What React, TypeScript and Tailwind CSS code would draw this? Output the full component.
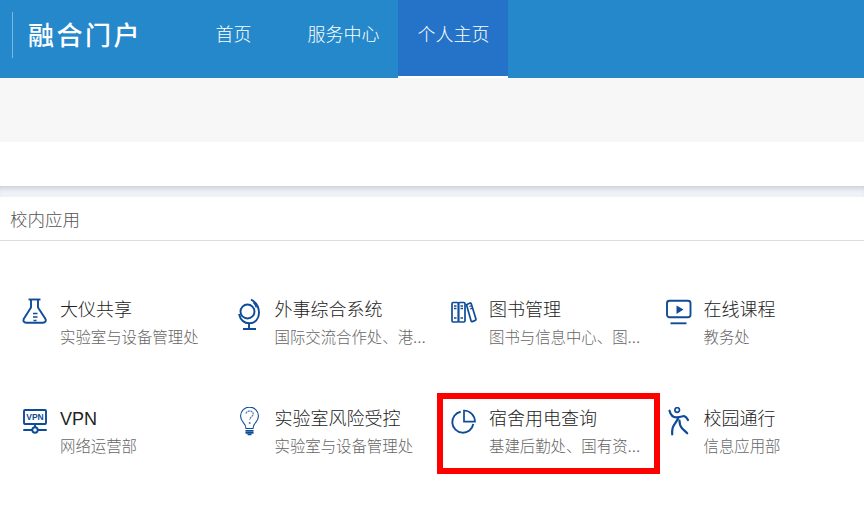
const font = { fontFamily: '"Liberation Sans", "Noto Sans CJK SC", sans-serif' };
const blue = "#0f4c97";

const Flask = () => (
  <svg width="32" height="32" viewBox="0 0 32 32" fill="none" stroke={blue} strokeWidth="1.900">
    <path d="M6.500 1.500h12" />
    <path d="M9 1.500v8L2 20.500c-1.300 2.400-.2 4.300 2.400 4.300h16.400c2.600 0 3.700-1.900 2.400-4.300L16 9.500v-8" />
    <path d="M11 15.500h4.500M11 19h4.500M11.500 22.500h3" strokeWidth="1.500" />
  </svg>
);

const Globe = () => (
  <svg width="32" height="32" viewBox="0 0 32 32" fill="none" stroke={blue} strokeWidth="1.900">
    <circle cx="10.500" cy="13.500" r="7" />
    <path d="M2 16c1.500 6 5.500 9.300 10.500 9.300 5.500 0 9.500-4.500 9.500-10.300 0-6-3.500-11-8-13.500" />
    <path d="M12 25.500v5M6 31h13" />
    <path d="M16.500 4.500c1.500 1.500 2.500 3 2.800 5" strokeWidth="1.500" />
  </svg>
);

const Books = () => (
  <svg width="32" height="32" viewBox="0 0 32 32" fill="none" stroke={blue} strokeWidth="1.700">
    <rect x="1" y="4.500" width="6.500" height="19.500" rx="1.200" />
    <rect x="7.500" y="4.500" width="6.500" height="19.500" rx="1.200" />
    <path d="M15.500 6.700l3.500-1.600c.6-.2 1 0 1.200.5l4.800 15.600c.1.600-.1 1-.7 1.200l-3 1.200c-.6.100-1 0-1.200-.6L15.500 6.700z" />
    <path d="M3 8h2.500M3 10.500h2.500M9.500 8H12M9.500 10.500H12M3 20h2.500M9.500 20H12M18.300 8.500l2-.7M19 11l2-.7" strokeWidth="1.300" />
  </svg>
);

const Screen = () => (
  <svg width="32" height="32" viewBox="0 0 32 32" fill="none" stroke={blue} strokeWidth="1.900">
    <rect x="1" y="2.700" width="23.500" height="16.600" rx="2.500" />
    <path d="M4.500 25.300h16" />
    <path d="M10.500 7.500l7 4-7 4.500z" fill={blue} stroke="none" />
  </svg>
);

const Vpn = () => (
  <svg width="32" height="32" viewBox="0 0 32 32" fill="none" stroke={blue} strokeWidth="1.900">
    <rect x="2" y="3" width="22" height="14" rx="1" />
    <text x="13" y="13" textAnchor="middle" fontSize="8.500" fontWeight="700" fill={blue} stroke="none" fontFamily="Liberation Sans, sans-serif">VPN</text>
    <path d="M1.300 23H10M16 23h8.700M13 17v3" />
    <circle cx="13" cy="23" r="2.700" />
  </svg>
);

const Bulb = () => (
  <svg width="32" height="32" viewBox="0 0 32 32" fill="none" stroke={blue} strokeWidth="1.100">
    <path d="M9 21.500c0-2.800-1.300-4.600-3-6.400A8.900 8.900 0 1 1 19 15.100c-1.700 1.800-3 3.600-3 6.400z" />
    <path d="M9 6.500c.6-1.700 2-2.500 3.700-2.500 2 0 3.500 1.300 3.500 3 0 2.600-3.500 3-3.500 6" strokeWidth="1.300" strokeDasharray="2 .7" opacity="0.700" />
    <circle cx="12.700" cy="16" r="1" fill={blue} stroke="none" opacity="0.700" />
    <path d="M8.500 23.800h8M8.500 25.800h8" strokeWidth="1.700" />
    <path d="M10.500 27.500h4" strokeWidth="1.500" />
  </svg>
);

const Pie = () => (
  <svg width="32" height="32" viewBox="0 0 32 32" fill="none" stroke={blue} strokeWidth="1.900">
    <path d="M9.700 4.700A10.600 10.600 0 1 0 22.300 17" />
    <path d="M13 3.500A11.200 11.200 0 0 1 24 14.700H13z" strokeWidth="1.700" />
  </svg>
);

const Runner = () => (
  <svg width="32" height="32" viewBox="0 0 32 32" fill="none" stroke={blue} strokeWidth="2.200" strokeLinecap="round">
    <circle cx="11.200" cy="3" r="2.300" strokeWidth="1.700" />
    <path d="M3.500 3.700c1 4 3.500 6.600 7 6.600 3 0 5.500-.8 7.500-1.300 1.500.5 3 2 4 4" />
    <path d="M12.200 11.300c-1.500 3.500-4.500 6-5.500 9.500-.5 2-.7 4.300-.5 6.500" />
    <path d="M13.500 13.700c0 3 .5 5.300 2.500 7.500 1.500 1.600 3.500 3.300 5.200 5.100" />
  </svg>
);

const apps = [
  { icon: <Flask />, title: "大仪共享", sub: "实验室与设备管理处" },
  { icon: <Globe />, title: "外事综合系统", sub: "国际交流合作处、港..." },
  { icon: <Books />, title: "图书管理", sub: "图书与信息中心、图..." },
  { icon: <Screen />, title: "在线课程", sub: "教务处" },
  { icon: <Vpn />, title: "VPN", sub: "网络运营部" },
  { icon: <Bulb />, title: "实验室风险受控", sub: "实验室与设备管理处" },
  { icon: <Pie />, title: "宿舍用电查询", sub: "基建后勤处、国有资..." },
  { icon: <Runner />, title: "校园通行", sub: "信息应用部" },
];

const App = () => {
  return (
    <div className="relative h-[514px] w-[864px] overflow-hidden bg-white" style={font}>
      {/* Header */}
      <header className="flex h-[78px] bg-[#2488cb]">
        <div className="flex w-[178px] items-center pl-3">
          <div className="mb-[9px] h-[46px] w-px bg-white/40" />
          <span className="mb-[5px] ml-[15px] text-[26px] font-medium tracking-[2.500px] text-white">融合门户</span>
        </div>
        <nav className="flex text-white">
          <a className="flex w-[110px] items-center justify-center pb-[9px] pl-px text-lg font-light">首页</a>
          <a className="flex w-[110px] items-center justify-center pb-[9px] pl-px text-lg font-light">服务中心</a>
          <a className="flex w-[110px] items-center justify-center border-b-2 border-white bg-[#2473c8] pb-[7px] pl-px text-lg font-light">个人主页</a>
        </nav>
      </header>

      <div className="h-16 bg-[#f7f7f7]" />
      <div className="h-11 bg-white" />
      <div className="h-[11px] bg-[#eff2f7] shadow-[inset_0_5px_5px_-3px_rgba(120,130,150,0.35)]" />

      {/* 校内应用 */}
      <div className="flex h-11 items-center border-b border-[#dcdcdc] pl-2.5 pt-[3px] text-[17.500px] font-light text-[#555]">校内应用</div>

      <div className="grid w-[858px] grid-cols-4 pt-[45px]">
        {apps.map((app, index) => (
          <div key={index} className="flex h-[108.500px] items-start pl-[22px]">
            <div className="w-[38px] shrink-0 pt-[12px]">{app.icon}</div>
            <div className="min-w-0 flex-1 whitespace-nowrap">
              <div className="text-lg leading-[48px] font-light text-[#222]">{app.title}</div>
              <div className="-mt-[2px] text-[15.400px] leading-[12px] font-light text-[#666]">{app.sub}</div>
            </div>
          </div>
        ))}
      </div>

      {/* red annotation */}
      <div className="absolute left-[437px] top-[393px] h-[81px] w-[223px] border-[6px] border-[#fe0000]" />
    </div>
  );
};

export default App;
